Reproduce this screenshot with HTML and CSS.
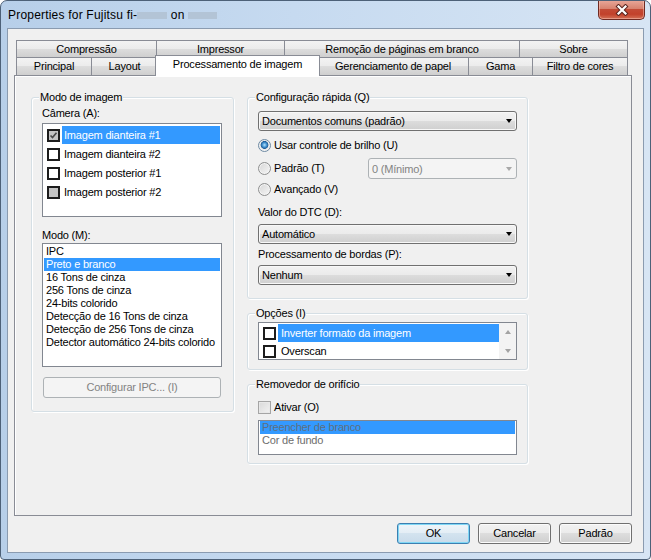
FILE: index.html
```html
<!DOCTYPE html>
<html>
<head>
<meta charset="utf-8">
<link rel="stylesheet" href="styles.css">
</head>
<body>
<div class="window">
  <div class="titlebar">
    <div class="title">Properties for Fujitsu fi-<span class="blur b1"></span> on <span class="blur b2"></span></div>
    <div class="close">
      <svg width="14" height="12" viewBox="0 0 14 12"><path d="M3.5 2.5 L10.5 9.5 M10.5 2.5 L3.5 9.5" stroke="#5b2620" stroke-width="4.2" stroke-linecap="square" fill="none"/><path d="M3.5 2.5 L10.5 9.5 M10.5 2.5 L3.5 9.5" stroke="#ffffff" stroke-width="2.2" stroke-linecap="square" fill="none"/></svg>
    </div>
  </div>
  <div class="client">
    <div class="tabs">
      <div class="tabrow row1">
        <div class="tab t-comp">Compressão</div>
        <div class="tab t-imp">Impressor</div>
        <div class="tab t-rem">Remoção de páginas em branco</div>
        <div class="tab t-sob">Sobre</div>
      </div>
      <div class="tabrow row2">
        <div class="tab t-pri">Principal</div>
        <div class="tab t-lay">Layout</div>
        <div class="tab sel">Processamento de imagem</div>
        <div class="tab t-ger">Gerenciamento de papel</div>
        <div class="tab t-gam">Gama</div>
        <div class="tab t-fil">Filtro de cores</div>
      </div>
    </div>
    <div class="panel">
      <div class="group left">
        <div class="gtitle">Modo de imagem</div>
        <div class="label lbl-cam">Câmera (A):</div>
        <div class="listbox cam">
          <div class="citem"><span class="cb gray"><svg width="9" height="9" viewBox="0 0 9 9"><path d="M1.5 4.5 L3.5 6.5 L7.5 1.8" stroke="#4a4a4a" stroke-width="1.7" fill="none"/></svg></span><span class="ctext hl">Imagem dianteira #1</span></div>
          <div class="citem"><span class="cb"></span><span class="ctext">Imagem dianteira #2</span></div>
          <div class="citem"><span class="cb"></span><span class="ctext">Imagem posterior #1</span></div>
          <div class="citem"><span class="cb gray"></span><span class="ctext">Imagem posterior #2</span></div>
        </div>
        <div class="label lbl-mode">Modo (M):</div>
        <div class="listbox mode">
          <div class="mitem">IPC</div>
          <div class="mitem hl">Preto e branco</div>
          <div class="mitem">16 Tons de cinza</div>
          <div class="mitem">256 Tons de cinza</div>
          <div class="mitem">24-bits colorido</div>
          <div class="mitem">Detecção de 16 Tons de cinza</div>
          <div class="mitem">Detecção de 256 Tons de cinza</div>
          <div class="mitem">Detector automático 24-bits colorido</div>
        </div>
        <div class="btn disabled ipc">Configurar IPC... (I)</div>
      </div>
      <div class="rightcol">
        <div class="group g1">
          <div class="gtitle">Configuração rápida (Q)</div>
          <div class="combo c-quick"><span>Documentos comuns (padrão)</span><span class="arrow"></span></div>
          <div class="rrow r1"><span class="radio on"></span><span class="rtext">Usar controle de brilho (U)</span></div>
          <div class="rrow r2"><span class="radio"></span><span class="rtext">Padrão (T)</span><div class="combo dis c-min"><span>0 (Mínimo)</span><span class="arrow"></span></div></div>
          <div class="rrow r3"><span class="radio"></span><span class="rtext">Avançado (V)</span></div>
          <div class="label lbl-dtc">Valor do DTC (D):</div>
          <div class="combo c-dtc"><span>Automático</span><span class="arrow"></span></div>
          <div class="label lbl-bord">Processamento de bordas (P):</div>
          <div class="combo c-bord"><span>Nenhum</span><span class="arrow"></span></div>
        </div>
        <div class="group g2">
          <div class="gtitle">Opções (I)</div>
          <div class="listbox opts">
            <div class="optitems">
              <div class="oitem"><span class="cb"></span><span class="otext hl">Inverter formato da imagem</span></div>
              <div class="oitem"><span class="cb"></span><span class="otext">Overscan</span></div>
            </div>
            <div class="vscroll">
              <div class="sbtn"><span class="up"></span></div>
              <div class="sbtn"><span class="down"></span></div>
            </div>
          </div>
        </div>
        <div class="group g3">
          <div class="gtitle">Removedor de orifício</div>
          <div class="chkrow"><span class="wcb"></span><span class="rtext">Ativar (O)</span></div>
          <div class="listbox holes">
            <div class="hitem hl">Preencher de branco</div>
            <div class="hitem">Cor de fundo</div>
          </div>
        </div>
      </div>
    </div>
    <div class="buttons">
      <div class="btn default">OK</div>
      <div class="btn">Cancelar</div>
      <div class="btn">Padrão</div>
    </div>
  </div>
</div>
</body>
</html>
```

FILE: styles.css
```css
* { box-sizing: border-box; }
html, body { margin: 0; padding: 0; }
body {
  width: 651px;
  height: 560px;
  overflow: hidden;
  font-family: "Liberation Sans", Arial, sans-serif;
  font-size: 11px;
  letter-spacing: -0.2px;
  color: #000;
  background: #ffffff;
}
.window {
  width: 651px;
  height: 560px;
  border: 1px solid #4d6178;
  border-radius: 7px 7px 4px 4px;
  background: linear-gradient(to right, #b7cfe9 0%, #c6daf0 45%, #d7e5f4 100%);
  display: flex;
  flex-direction: column;
  overflow: hidden;
}
.titlebar {
  height: 27px;
  display: flex;
  align-items: flex-start;
  flex: none;
}
.title {
  font-size: 12px;
  letter-spacing: 0.2px;
  line-height: 14px;
  padding: 7px 0 0 7px;
  white-space: nowrap;
  color: #000;
}
.blur {
  display: inline-block;
  height: 7px;
  background: #b3c4d6;
  vertical-align: 0;
}
.b1 { width: 30px; }
.b2 { width: 29px; }
.close {
  margin-left: auto;
  margin-right: 5px;
  margin-top: -1px;
  width: 47px;
  height: 20px;
  border: 1px solid #6f2a22;
  border-top: none;
  border-radius: 0 0 5px 5px;
  background: linear-gradient(#e9a99b 0%, #d7826f 45%, #c34a35 50%, #c2412b 75%, #d37056 100%);
  box-shadow: inset 0 0 0 1px rgba(255, 210, 200, 0.45);
  display: flex;
  align-items: center;
  justify-content: center;
}
.client {
  margin: 0 6px 6px 6px;
  height: 525px;
  border: 1px solid #8a9bb0;
  background: #f0f0f0;
  padding: 11px 11px 0 6px;
  display: flex;
  flex-direction: column;
}
/* Tabs */
.tabs { margin-left: 2px; }
.tabrow { display: flex; align-items: flex-start; }
.tab {
  border: 1px solid #898c95;
  border-bottom: none;
  background: linear-gradient(#f3f3f3 0%, #ebebeb 50%, #dddddd 50%, #cfcfcf 100%);
  text-align: center;
  white-space: nowrap;
  margin-left: -1px;
}
.tab:first-child { margin-left: 0; }
.row1 .tab { height: 17px; line-height: 16px; }
.row2 .tab { height: 18px; line-height: 17px; }
.t-comp { width: 141px; }
.t-imp { width: 129px; }
.t-rem { width: 236px; }
.t-sob { width: 109px; }
.t-pri { width: 76px; }
.t-lay { width: 67px; }
.t-ger { width: 152px; }
.t-gam { width: 65px; }
.t-fil { width: 96px; }
.row2 .tab.sel {
  position: relative;
  z-index: 2;
  width: 165px;
  height: 21px;
  margin: -2px -2px -1px -3px;
  background: #ffffff;
  line-height: 16px;
  padding-top: 0;
}
.panel {
  width: 618px;
  height: 441px;
  border: 1px solid #898c95;
  box-shadow: inset 1px 1px 0 #ffffff;
  padding: 21px 0 0 16px;
  display: flex;
  align-items: flex-start;
  flex: none;
}
/* Group boxes */
.group {
  border: 1px solid #d5dfe5;
  border-radius: 3px;
  padding: 0 10px 13px 10px;
  box-shadow: inset 1px 1px 0 #ffffff, 1px 1px 0 #ffffff;
}
.gtitle {
  display: table;
  margin: -7px 0 0 -3px;
  padding: 0 1px;
  background: #f0f0f0;
  line-height: 13px;
  white-space: nowrap;
}
.label { line-height: 13px; white-space: nowrap; }
.left { width: 203px; }
.lbl-cam { margin-top: 3px; }
.lbl-mode { margin-top: 12px; }
.listbox {
  border: 1px solid #828790;
  background: #ffffff;
}
.cam {
  width: 180px;
  height: 94px;
  margin-top: 3px;
  padding-top: 2px;
}
.citem {
  display: flex;
  align-items: center;
  height: 18px;
  margin-bottom: 1px;
}
.cb {
  width: 13px;
  height: 13px;
  flex: none;
  border: 2px solid #1c1c1c;
  background: #ffffff;
  margin-left: 4px;
  display: flex;
  align-items: center;
  justify-content: center;
}
.cb.gray { background: #c4c4c4; }
.ctext {
  flex: 1;
  height: 18px;
  line-height: 18px;
  margin: 0 1px 0 2px;
  padding-left: 2px;
  white-space: nowrap;
}
.hl { background: #3399ff; color: #ffffff; }
.mode {
  width: 180px;
  height: 124px;
  margin-top: 1px;
  padding: 1px;
}
.mitem {
  height: 13px;
  line-height: 13px;
  padding-left: 2px;
  white-space: nowrap;
}
.btn {
  width: 73px;
  height: 21px;
  border: 1px solid #707070;
  border-radius: 3px;
  background: linear-gradient(#f2f2f2 0%, #ebebeb 50%, #dddddd 50%, #cfcfcf 100%);
  box-shadow: inset 0 0 0 1px #fbfbfb;
  text-align: center;
  line-height: 19px;
  white-space: nowrap;
}
.btn.disabled {
  border-color: #adb2b5;
  background: #f4f4f4;
  box-shadow: none;
  color: #838383;
}
.ipc { width: 178px; margin: 10px 1px 0 1px; }
/* right column */
.rightcol {
  width: 281px;
  margin-left: 13px;
  display: flex;
  flex-direction: column;
}
.g1 { padding-bottom: 13px; }
.combo {
  height: 20px;
  border: 1px solid #707070;
  border-radius: 3px;
  background: linear-gradient(#f2f2f2 0%, #ebebeb 50%, #dddddd 50%, #cfcfcf 100%);
  box-shadow: inset 0 0 0 1px #f8f8f8;
  display: flex;
  align-items: center;
  padding-left: 3px;
  white-space: nowrap;
}
.arrow {
  margin-left: auto;
  margin-right: 4px;
  width: 0;
  height: 0;
  border-left: 3.5px solid transparent;
  border-right: 3.5px solid transparent;
  border-top: 4px solid #000000;
}
.combo.dis {
  border-color: #adb2b5;
  background: #f4f4f4;
  box-shadow: none;
  color: #838383;
}
.combo.dis .arrow { border-top-color: #a8a8a8; }
.c-quick { margin-top: 7px; }
.rrow {
  display: flex;
  align-items: center;
  white-space: nowrap;
}
.r1 { height: 20px; margin-top: 4px; }
.r2 { height: 21px; margin-top: 3px; }
.r3 { height: 20px; }
.radio {
  width: 13px;
  height: 13px;
  flex: none;
  border-radius: 50%;
  border: 1px solid #8e8f8f;
  background: linear-gradient(135deg, #d6d6d6 0%, #f6f6f6 100%);
  box-shadow: inset 0 0 0 1px #f4f4f4;
}
.radio.on {
  border-color: #6e8aa3;
  background: radial-gradient(circle at 50% 45%, #b7e3fb 0px, #4a9ad7 2px, #1f5e99 3.6px, #e9e9e9 4.2px, #f7f7f7 6px);
  box-shadow: none;
}
.rtext { margin-left: 3px; line-height: 13px; }
.c-min { width: 149px; height: 21px; margin-left: auto; }
.lbl-dtc { margin-top: 7px; }
.c-dtc { margin-top: 5px; }
.lbl-bord { margin-top: 4px; }
.c-bord { margin-top: 4px; }
.g2 { margin-top: 14px; padding-bottom: 9px; }
.opts {
  margin-top: 2px;
  height: 38px;
  display: flex;
}
.optitems { flex: 1; padding-top: 1px; overflow: hidden; }
.oitem {
  display: flex;
  align-items: center;
  height: 18px;
}
.otext {
  flex: 1;
  height: 18px;
  line-height: 18px;
  margin-left: 2px;
  padding-left: 3px;
  white-space: nowrap;
}
.vscroll {
  width: 17px;
  background: #f3f3f3;
  display: flex;
  flex-direction: column;
  justify-content: space-between;
}
.sbtn {
  height: 17px;
  display: flex;
  align-items: center;
  justify-content: center;
}
.up, .down {
  width: 0;
  height: 0;
  border-left: 3.5px solid transparent;
  border-right: 3.5px solid transparent;
}
.up { border-bottom: 4px solid #a3a3a3; }
.down { border-top: 4px solid #a3a3a3; }
.g3 { margin-top: 14px; padding-bottom: 8px; }
.chkrow {
  margin-top: 10px;
  height: 13px;
  display: flex;
  align-items: center;
  white-space: nowrap;
}
.wcb {
  width: 13px;
  height: 13px;
  flex: none;
  border: 1px solid #a5a5a5;
  background: linear-gradient(135deg, #d9d9d9 0%, #f2f2f2 100%);
  box-shadow: inset 0 0 0 1px #e8e8e8;
}
.holes {
  margin-top: 6px;
  height: 35px;
  padding: 0 1px;
}
.hitem {
  height: 13px;
  line-height: 13px;
  padding-left: 2px;
  color: #6d6d6d;
  white-space: nowrap;
}
.hitem.hl { color: #5f6f80; }
/* bottom buttons */
.buttons {
  margin-top: 7px;
  display: flex;
  justify-content: flex-end;
  gap: 8px;
}
.btn.default {
  border-color: #3c7fb1;
  background: linear-gradient(#eef5fa 0%, #e3edf5 50%, #d3e3ef 50%, #c8dbea 100%);
  box-shadow: inset 0 0 0 1px #7fd7f5;
}
```
